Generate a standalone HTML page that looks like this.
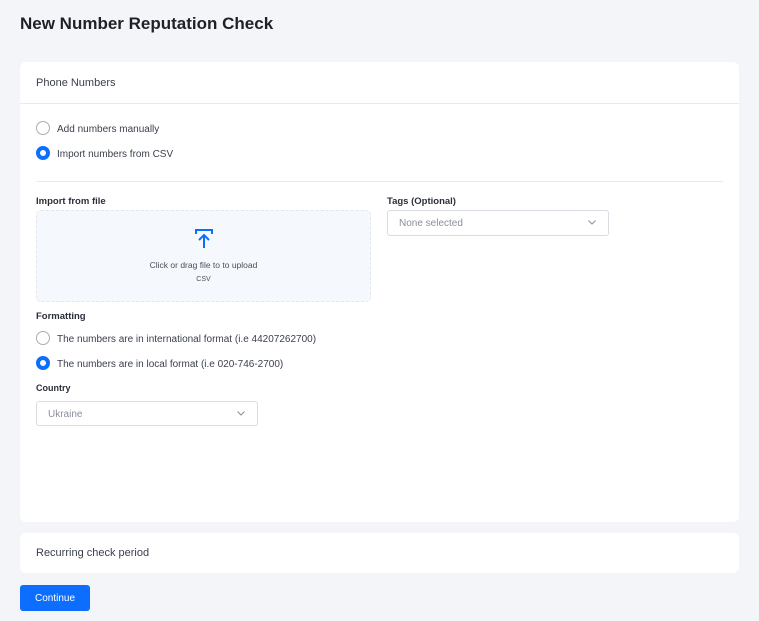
<!DOCTYPE html>
<html><head><style>
*{box-sizing:border-box;margin:0;padding:0}
body{width:759px;height:621px;background:#f4f5f9;font-family:"Liberation Sans",sans-serif;color:#2b2f3a;position:relative;overflow:hidden}
.abs{position:absolute}
.card{position:absolute;left:20px;width:719px;background:#fff;border-radius:6px}
.radio{position:absolute;width:14px;height:14px;border-radius:50%;border:1px solid #a9adb5;background:#fff}
.radio.on{border:4px solid #0d6efd}
.t{position:absolute;font-size:10px;color:#3a3f4b;white-space:nowrap;line-height:14px;margin-top:2px}
.lbl{position:absolute;font-size:9.5px;font-weight:bold;color:#2b2f3a;line-height:12px;margin-top:1px}
.sel{position:absolute;background:#fff;border:1px solid #d9dce2;border-radius:3px;font-size:10px;color:#8a8f9c;padding-left:11px;line-height:26px}
.chev{position:absolute;right:12px;top:9px}
</style></head><body>
<div class="abs" style="left:20px;top:14px;font-size:17px;font-weight:bold;color:#1e2128">New Number Reputation Check</div>
<div class="card" style="top:62px;height:460px">
 <div class="abs" style="left:16px;top:14px;font-size:11px;color:#3a3f4b;line-height:14px">Phone Numbers</div>
 <div class="abs" style="left:0;top:41px;width:719px;height:1px;background:#e8eaee"></div>
 <div class="radio" style="left:16px;top:59px"></div><div class="t" style="left:37px;top:59px">Add numbers manually</div>
 <div class="radio on" style="left:16px;top:84px"></div><div class="t" style="left:37px;top:84px">Import numbers from CSV</div>
 <div class="abs" style="left:16px;top:119px;width:687px;height:1px;background:#e8eaee"></div>
 <div class="lbl" style="left:16px;top:133px">Import from file</div>
 <div class="abs" style="left:16px;top:148px;width:335px;height:92px;background:#f5f8fc;border:1px dashed #e3e7ee;border-radius:5px">
  <svg class="abs" style="left:157px;top:16px" width="20" height="22" viewBox="0 0 20 22" fill="none" stroke="#0d6efd" stroke-width="2"><path d="M2 7V3h16v4"/><path d="M10 21V8M5 13l5-5 5 5"/></svg>
  <div class="abs" style="left:0;width:333px;top:49px;text-align:center;font-size:8.5px;color:#4a4f5c;line-height:10px">Click or drag file to to upload</div>
  <div class="abs" style="left:0;width:333px;top:64px;text-align:center;font-size:7px;color:#4a4f5c;line-height:9px">CSV</div>
 </div>
 <div class="lbl" style="left:367px;top:133px">Tags (Optional)</div>
 <div class="sel" style="left:367px;top:148px;width:222px;height:26px">None selected<svg class="chev" width="8" height="5" viewBox="0 0 8 5" fill="none" stroke="#8a8f9c"><path d="M0.5 0.5l3.5 3.5 3.5-3.5"/></svg></div>
 <div class="lbl" style="left:16px;top:248px">Formatting</div>
 <div class="radio" style="left:16px;top:269px"></div><div class="t" style="left:37px;top:269px">The numbers are in international format (i.e 44207262700)</div>
 <div class="radio on" style="left:16px;top:294px"></div><div class="t" style="left:37px;top:294px">The numbers are in local format (i.e 020-746-2700)</div>
 <div class="lbl" style="left:16px;top:319px;font-size:9px">Country</div>
 <div class="sel" style="left:16px;top:339px;width:222px;height:25px;line-height:25px">Ukraine<svg class="chev" width="8" height="5" viewBox="0 0 8 5" fill="none" stroke="#8a8f9c"><path d="M0.5 0.5l3.5 3.5 3.5-3.5"/></svg></div>
</div>
<div class="card" style="top:533px;height:40px">
 <div class="abs" style="left:16px;top:13px;font-size:11px;color:#3a3f4b;line-height:14px">Recurring check period</div>
</div>
<div class="abs" style="left:20px;top:585px;width:70px;height:26px;background:#0d6efd;border-radius:3px;color:#fff;font-size:10px;text-align:center;line-height:28px">Continue</div>
</body></html>
